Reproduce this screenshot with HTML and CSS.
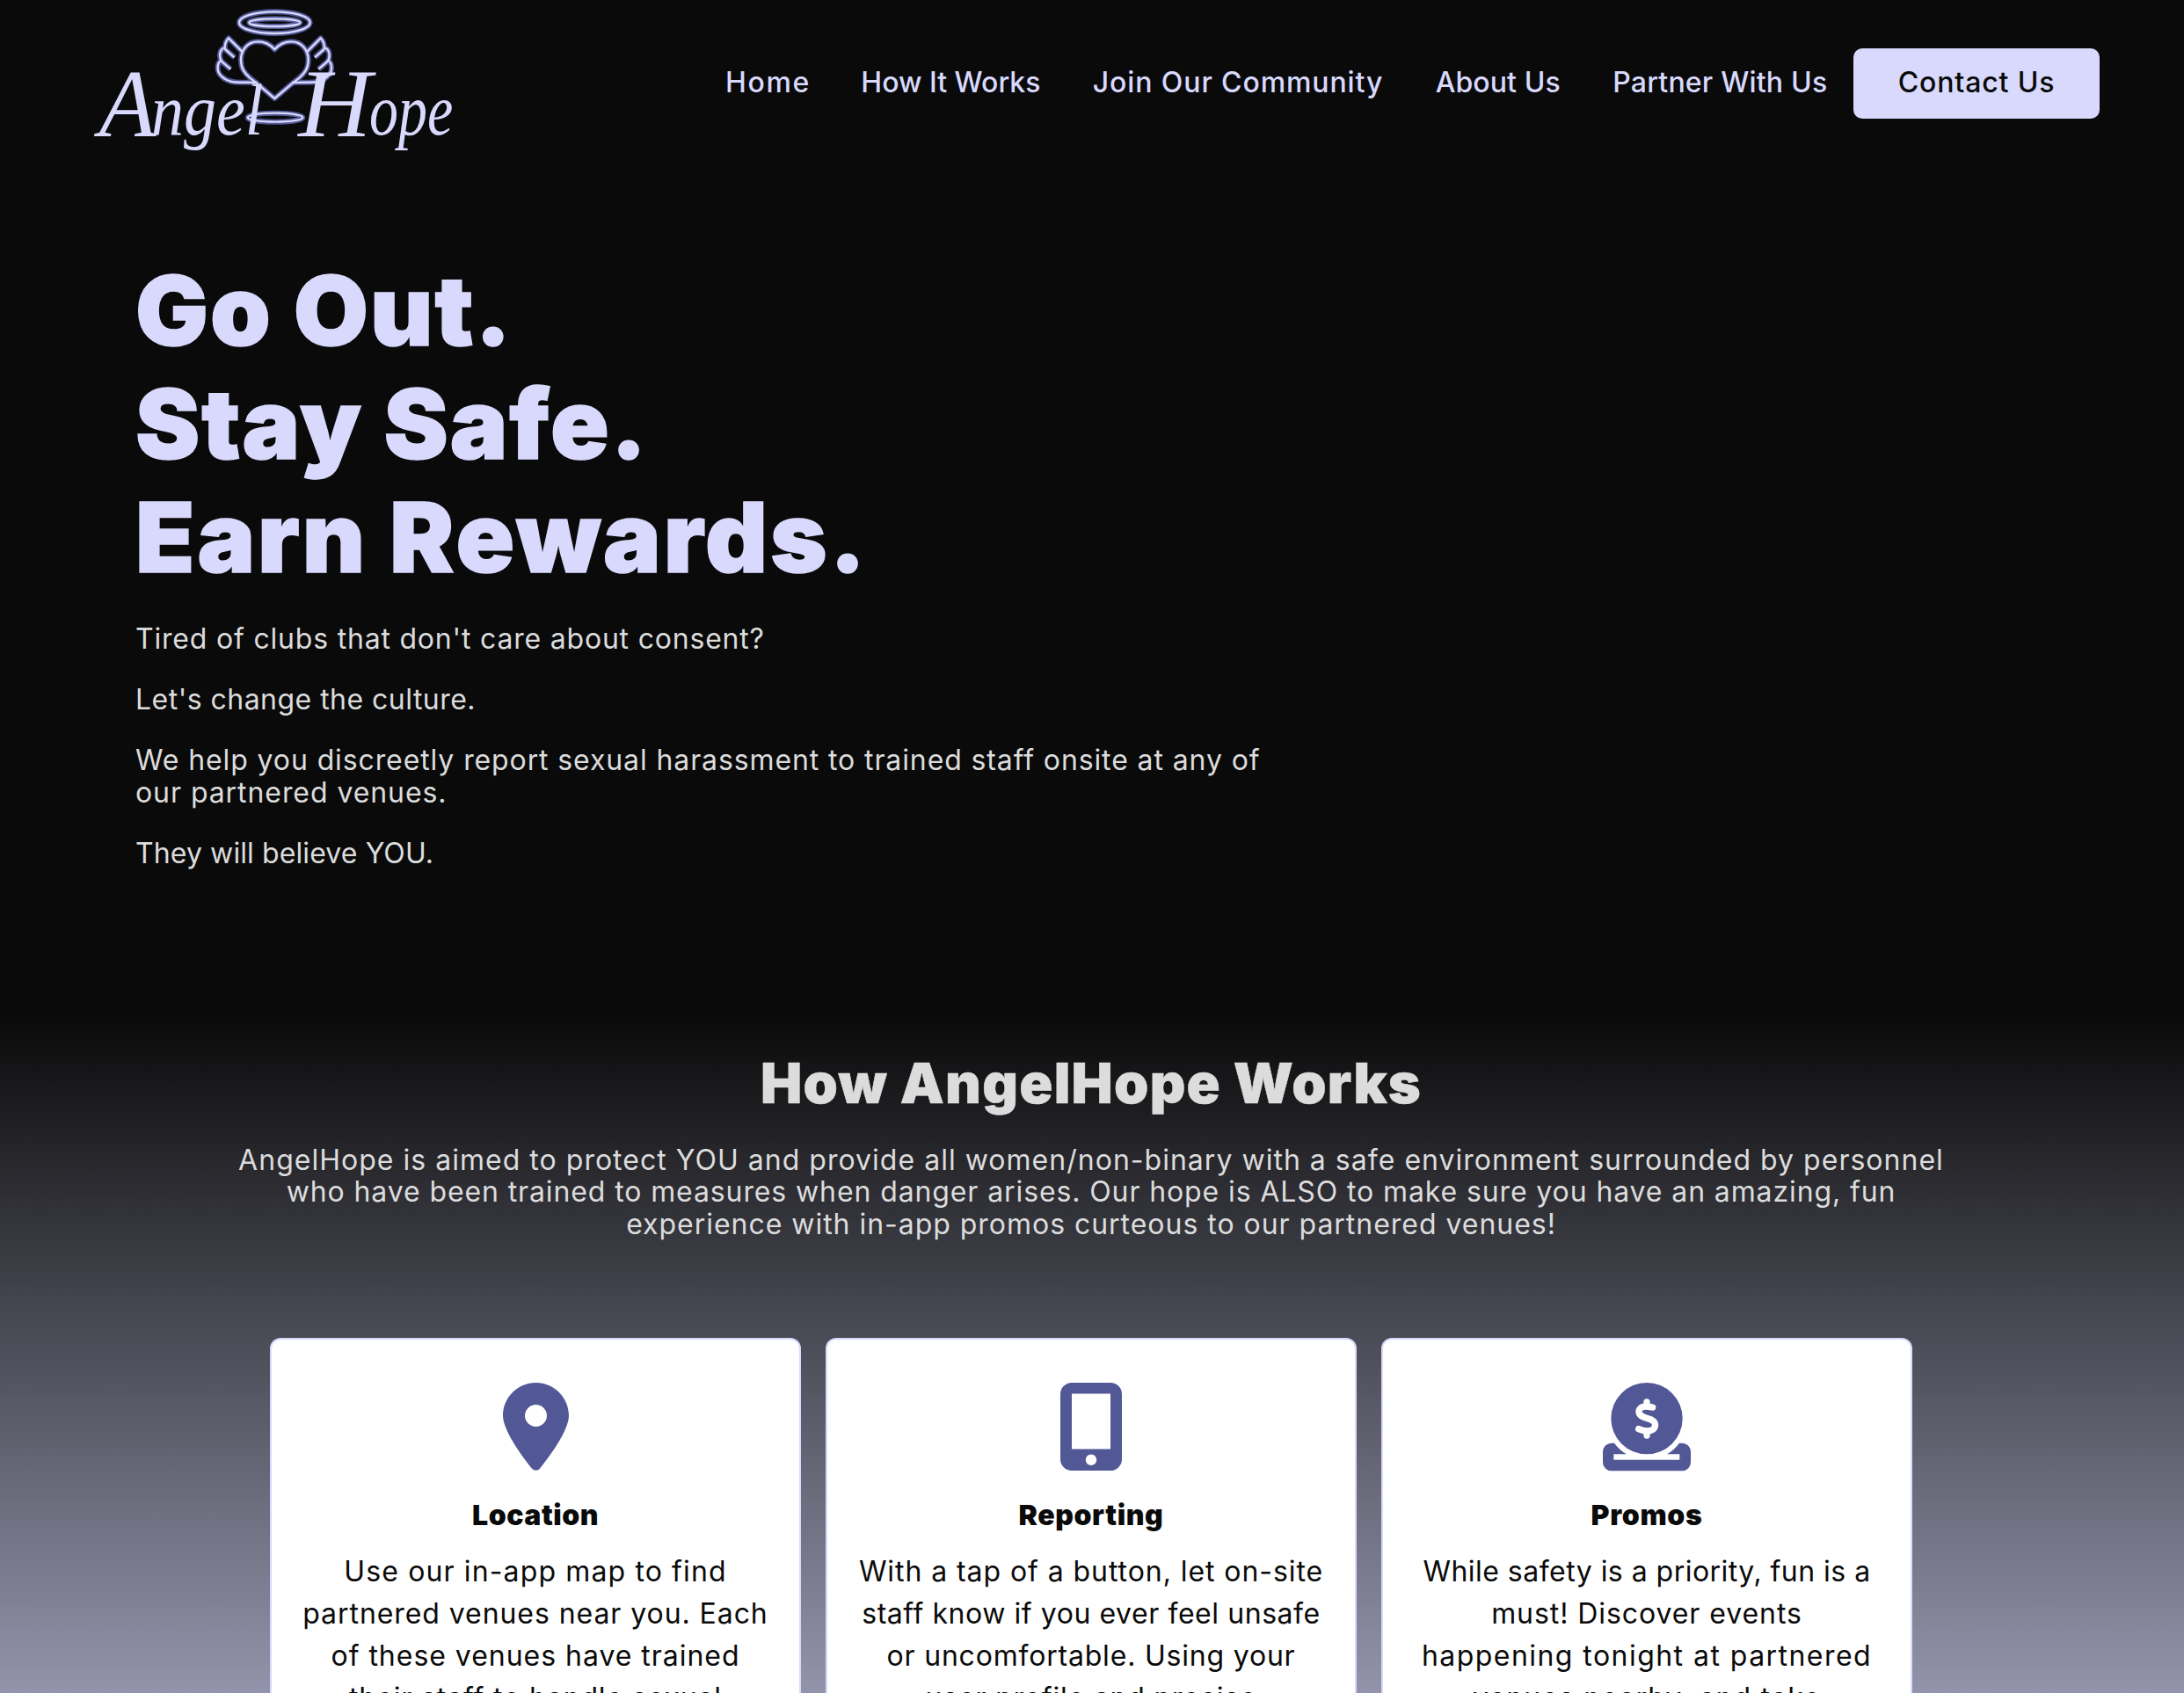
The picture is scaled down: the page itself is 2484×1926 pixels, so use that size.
FILE: index.html
```html
<!DOCTYPE html>
<html lang="en">
<head>
<meta charset="utf-8">
<title>AngelHope</title>
<link rel="stylesheet" href="styles.css">
</head>
<body>
<header class="header">
  <a class="brand" aria-label="AngelHope">
    <svg class="logo" viewBox="0 0 1350 600">
      <defs>
        <g id="wing">
          <path d="M558 178 L510 130 C499 142 496 156 498 168 L530 196"/>
          <path d="M494 163 C478 172 476 196 487 210 L517 236"/>
          <path d="M484 206 C470 216 467 246 488 262 C506 280 530 282 560 281 L608 282"/>
        </g>
        <g id="emblem">
          <ellipse cx="667" cy="77" rx="121" ry="37"/>
          <ellipse cx="667" cy="77" rx="87" ry="13"/>
          <ellipse cx="669" cy="401" rx="94" ry="15"/>
          <use href="#wing"/>
          <use href="#wing" transform="translate(1334 0) scale(-1 1)"/>
          <path d="M667 169 C650 149 632 142 610 142 C575 142 552 170 552 204 C552 234 564 249 582 265 L612 289 L667 336 L722 289 L752 265 C770 249 782 234 782 204 C782 170 759 142 724 142 C702 142 684 149 667 169 Z"/>
        </g>
      </defs>
      <use class="glow" href="#emblem"/>
      <use class="tube" href="#emblem"/>
      <g class="wordmark">
        <text class="capital" x="68" y="466" textLength="195" lengthAdjust="spacingAndGlyphs">A</text>
        <text class="letters" x="246" y="460" textLength="382" lengthAdjust="spacingAndGlyphs">ngel</text>
        <text class="capital" x="748" y="466" textLength="250" lengthAdjust="spacingAndGlyphs">H</text>
        <text class="letters" x="990" y="460" textLength="286" lengthAdjust="spacingAndGlyphs">ope</text>
      </g>
    </svg>
  </a>
  <nav class="nav">
    <a class="link home">Home</a>
    <a class="link">How It Works</a>
    <a class="link t90">Join Our Community</a>
    <a class="link t10">About Us</a>
    <a class="link t20">Partner With Us</a>
    <a class="button t85">Contact Us</a>
  </nav>
</header>
<main>
  <section class="hero">
    <h1><span class="h-go">Go Out.</span><span class="h-stay">Stay Safe.</span><span class="h-earn">Earn Rewards.</span></h1>
    <p class="t80">Tired of clubs that don't care about consent?</p>
    <p class="t50">Let's change the culture.</p>
    <p><span class="line t90">We help you discreetly report sexual harassment to trained staff onsite at any of</span><span class="line t95">our partnered venues.</span></p>
    <p class="t10">They will believe YOU.</p>
  </section>
  <section class="works">
    <h2>How AngelHope Works</h2>
    <p class="intro"><span class="line t102">AngelHope is aimed to protect YOU and provide all women/non-binary with a safe environment surrounded by personnel</span><span class="line t90">who have been trained to measures when danger arises. Our hope is ALSO to make sure you have an amazing, fun</span><span class="line t100">experience with in-app promos curteous to our partnered venues!</span></p>
    <div class="cards">
      <article class="card">
        <svg class="icon" viewBox="0 0 384 512"><path d="M215.7 499.2C267 435 384 279.4 384 192C384 86 298 0 192 0S0 86 0 192c0 87.4 117 243 168.300 307.200c12.300 15.300 35.100 15.300 47.400 0zM192 128a64 64 0 1 1 0 128 64 64 0 1 1 0-128z"/></svg>
        <h3 class="h-location">Location</h3>
        <p><span class="line t115">Use our in-app map to find</span><span class="line t95">partnered venues near you. Each</span><span class="line t100">of these venues have trained</span><span class="line t85">their staff to handle sexual</span></p>
      </article>
      <article class="card">
        <svg class="icon" viewBox="0 0 70 100"><path fill-rule="evenodd" d="M13 0H57A13 13 0 0 1 70 13V87A13 13 0 0 1 57 100H13A13 13 0 0 1 0 87V13A13 13 0 0 1 13 0ZM13 12.500V75.500H57V12.500ZM35 81.500a6.250 6.250 0 1 0 0 12.500a6.250 6.250 0 1 0 0-12.500Z"/></svg>
        <h3 class="h-reporting">Reporting</h3>
        <p><span class="line t95">With a tap of a button, let on-site</span><span class="line t55">staff know if you ever feel unsafe</span><span class="line t80">or uncomfortable. Using your</span><span class="line t80">user profile and precise</span></p>
      </article>
      <article class="card">
        <svg class="icon" viewBox="0 0 300 300"><circle cx="150" cy="122" r="122"/><path fill-rule="evenodd" d="M39 206A140 140 0 0 0 81 244H37V263H262V244H219A140 140 0 0 0 261 206H270A30 30 0 0 1 300 236V272A29 29 0 0 1 271 301H29A29 29 0 0 1 0 272V236A30 30 0 0 1 30 206Z"/><path class="dollar" d="M150 66V78M150 168V180M170 84C160 82 156 81 148 81C129 81 122 91 123 101C125 114 138 117 150 121C166 125 179 130 179 144C178 158 167 165 151 165C138 165 131 162 122 158"/></svg>
        <h3 class="h-promos">Promos</h3>
        <p><span class="line t50">While safety is a priority, fun is a</span><span class="line t95">must! Discover events</span><span class="line t140">happening tonight at partnered</span><span class="line t115">venues nearby, and take</span></p>
      </article>
    </div>
  </section>
</main>
</body>
</html>
```
FILE: styles.css
```css
* { box-sizing: border-box; margin: 0; padding: 0; }

html, body { height: 100%; overflow: hidden; }

body {
  background: #0a0a0a;
  color: #dcdcdc;
  font: 400 32px/37px "Inter", "Noto Sans", sans-serif;
}

/* Header */
.header {
  display: flex;
  align-items: flex-start;
  justify-content: space-between;
  height: 200px;
  padding: 0 96px 0 90px;
}

.brand, .logo { display: block; width: 450px; height: 200px; }
.glow, .tube { fill: none; stroke-linejoin: round; }
.glow { stroke: #525896; stroke-width: 18; }
.tube { stroke: #d8d9fc; stroke-width: 7; }
.wordmark { fill: #d8d9fc; font-family: "Liberation Serif", serif; font-style: italic; }
.capital { font-size: 330px; }
.letters { font-size: 245px; }

.nav { display: flex; align-items: center; height: 80px; margin-top: 55px; color: #d8d9fc; font-weight: 500; white-space: nowrap; }
.link { padding: 0 29.7px 3px; }
.home { padding-right: 27.500px; letter-spacing: 1.700px; }

.button {
  display: flex;
  align-items: center;
  justify-content: center;
  width: 280px;
  height: 80px;
  padding-bottom: 3px;
  border-radius: 10px;
  background: #d8d9fc;
  color: #0a0a0a;
}

/* Hero */
.hero { height: 955px; padding: 89px 0 0 154px; }
.hero h1 { margin-bottom: 32px; color: #d8d9fc; font-size: 110px; font-weight: 900; line-height: 129px; -webkit-text-stroke: 1.500px; }
.hero h1 span, .line { display: block; white-space: nowrap; }
.hero p { margin-bottom: 32px; }
.h-go { letter-spacing: 2px; }
.h-stay { letter-spacing: 1.900px; }
.h-earn { letter-spacing: 3px; }

/* How it works */
.works {
  display: flex;
  flex-direction: column;
  align-items: center;
  height: 771px;
  padding: 39px 2px 0 0;
  background: linear-gradient(#0a0a0a, #d8d9fc 1159px);
  text-align: center;
}

.works h2 { margin-bottom: 31.500px; font-size: 63px; font-weight: 900; line-height: 76px; letter-spacing: 1.250px; -webkit-text-stroke: .5px; }
.intro { margin-bottom: 111px; line-height: 36.500px; }
.cards { display: grid; grid-template-columns: repeat(3, 604px); gap: 28px; }

.card {
  height: 640px;
  padding-top: 49px;
  border: 2px solid #d8d9fc;
  border-radius: 12px;
  background: #fff;
  color: #0a0a0a;
  line-height: 48px;
}

.icon { display: block; height: 100px; margin: 0 auto 27px; fill: #525896; overflow: visible; }
.card h3 { margin-bottom: 16px; font-size: 32px; font-weight: 900; }
.h-location { letter-spacing: .5px; }
.h-reporting { letter-spacing: .6px; }
.h-promos { letter-spacing: .7px; }
.dollar { fill: none; stroke: #fff; stroke-width: 22; stroke-linecap: round; }

/* Letter spacing steps */
.t10 { letter-spacing: .1px; }
.t20 { letter-spacing: .2px; }
.t50 { letter-spacing: .47px; }
.t55 { letter-spacing: .56px; }
.t80 { letter-spacing: .8px; }
.t85 { letter-spacing: .86px; }
.t90 { letter-spacing: .89px; }
.t95 { letter-spacing: .93px; }
.t100 { letter-spacing: .97px; }
.t102 { letter-spacing: 1.02px; }
.t115 { letter-spacing: 1.13px; }
.t140 { letter-spacing: 1.45px; }
```
